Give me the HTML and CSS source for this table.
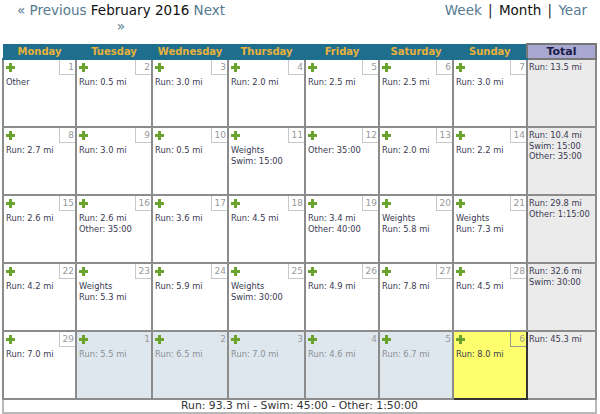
FILE: index.html
```html
<!DOCTYPE html>
<html>
<head>
<meta charset="utf-8">
<link rel="stylesheet" href="styles.css">
</head>
<body>
<div class="nav">
  <div class="nav-left"><a class="lnk">« Previous</a> <span class="cur">February 2016</span> <a class="lnk">Next</a> <a class="lnk">»</a></div>
  <div class="nav-right"><a class="lnk">Week</a> | <span class="cur">Month</span> | <a class="lnk">Year</a></div>
</div>
<table class="cal">
  <colgroup>
    <col class="w-mon"><col class="w-tue"><col class="w-wed"><col class="w-thu"><col class="w-fri"><col class="w-sat"><col class="w-sun"><col class="w-tot">
  </colgroup>
  <thead>
    <tr>
      <th>Monday</th><th>Tuesday</th><th>Wednesday</th><th>Thursday</th><th>Friday</th><th>Saturday</th><th>Sunday</th><th class="th-total">Total</th>
    </tr>
  </thead>
  <tbody>
    <tr>
      <td class="day"><div class="top"><svg class="add" viewBox="0 0 9 9"><path d="M3 0h3v3h3v3h-3v3h-3v-3h-3v-3h3z"/></svg><span class="num">1</span></div><div class="acts">Other</div></td>
      <td class="day"><div class="top"><svg class="add" viewBox="0 0 9 9"><path d="M3 0h3v3h3v3h-3v3h-3v-3h-3v-3h3z"/></svg><span class="num">2</span></div><div class="acts">Run: 0.5 mi</div></td>
      <td class="day"><div class="top"><svg class="add" viewBox="0 0 9 9"><path d="M3 0h3v3h3v3h-3v3h-3v-3h-3v-3h3z"/></svg><span class="num">3</span></div><div class="acts">Run: 3.0 mi</div></td>
      <td class="day"><div class="top"><svg class="add" viewBox="0 0 9 9"><path d="M3 0h3v3h3v3h-3v3h-3v-3h-3v-3h3z"/></svg><span class="num">4</span></div><div class="acts">Run: 2.0 mi</div></td>
      <td class="day"><div class="top"><svg class="add" viewBox="0 0 9 9"><path d="M3 0h3v3h3v3h-3v3h-3v-3h-3v-3h3z"/></svg><span class="num">5</span></div><div class="acts">Run: 2.5 mi</div></td>
      <td class="day"><div class="top"><svg class="add" viewBox="0 0 9 9"><path d="M3 0h3v3h3v3h-3v3h-3v-3h-3v-3h3z"/></svg><span class="num">6</span></div><div class="acts">Run: 2.5 mi</div></td>
      <td class="day"><div class="top"><svg class="add" viewBox="0 0 9 9"><path d="M3 0h3v3h3v3h-3v3h-3v-3h-3v-3h3z"/></svg><span class="num">7</span></div><div class="acts">Run: 3.0 mi</div></td>
      <td class="total"><div class="acts">Run: 13.5 mi</div></td>
    </tr>
    <tr>
      <td class="day"><div class="top"><svg class="add" viewBox="0 0 9 9"><path d="M3 0h3v3h3v3h-3v3h-3v-3h-3v-3h3z"/></svg><span class="num">8</span></div><div class="acts">Run: 2.7 mi</div></td>
      <td class="day"><div class="top"><svg class="add" viewBox="0 0 9 9"><path d="M3 0h3v3h3v3h-3v3h-3v-3h-3v-3h3z"/></svg><span class="num">9</span></div><div class="acts">Run: 3.0 mi</div></td>
      <td class="day"><div class="top"><svg class="add" viewBox="0 0 9 9"><path d="M3 0h3v3h3v3h-3v3h-3v-3h-3v-3h3z"/></svg><span class="num">10</span></div><div class="acts">Run: 0.5 mi</div></td>
      <td class="day"><div class="top"><svg class="add" viewBox="0 0 9 9"><path d="M3 0h3v3h3v3h-3v3h-3v-3h-3v-3h3z"/></svg><span class="num">11</span></div><div class="acts">Weights<br>Swim: 15:00</div></td>
      <td class="day"><div class="top"><svg class="add" viewBox="0 0 9 9"><path d="M3 0h3v3h3v3h-3v3h-3v-3h-3v-3h3z"/></svg><span class="num">12</span></div><div class="acts">Other: 35:00</div></td>
      <td class="day"><div class="top"><svg class="add" viewBox="0 0 9 9"><path d="M3 0h3v3h3v3h-3v3h-3v-3h-3v-3h3z"/></svg><span class="num">13</span></div><div class="acts">Run: 2.0 mi</div></td>
      <td class="day"><div class="top"><svg class="add" viewBox="0 0 9 9"><path d="M3 0h3v3h3v3h-3v3h-3v-3h-3v-3h3z"/></svg><span class="num">14</span></div><div class="acts">Run: 2.2 mi</div></td>
      <td class="total"><div class="acts">Run: 10.4 mi<br>Swim: 15:00<br>Other: 35:00</div></td>
    </tr>
    <tr>
      <td class="day"><div class="top"><svg class="add" viewBox="0 0 9 9"><path d="M3 0h3v3h3v3h-3v3h-3v-3h-3v-3h3z"/></svg><span class="num">15</span></div><div class="acts">Run: 2.6 mi</div></td>
      <td class="day"><div class="top"><svg class="add" viewBox="0 0 9 9"><path d="M3 0h3v3h3v3h-3v3h-3v-3h-3v-3h3z"/></svg><span class="num">16</span></div><div class="acts">Run: 2.6 mi<br>Other: 35:00</div></td>
      <td class="day"><div class="top"><svg class="add" viewBox="0 0 9 9"><path d="M3 0h3v3h3v3h-3v3h-3v-3h-3v-3h3z"/></svg><span class="num">17</span></div><div class="acts">Run: 3.6 mi</div></td>
      <td class="day"><div class="top"><svg class="add" viewBox="0 0 9 9"><path d="M3 0h3v3h3v3h-3v3h-3v-3h-3v-3h3z"/></svg><span class="num">18</span></div><div class="acts">Run: 4.5 mi</div></td>
      <td class="day"><div class="top"><svg class="add" viewBox="0 0 9 9"><path d="M3 0h3v3h3v3h-3v3h-3v-3h-3v-3h3z"/></svg><span class="num">19</span></div><div class="acts">Run: 3.4 mi<br>Other: 40:00</div></td>
      <td class="day"><div class="top"><svg class="add" viewBox="0 0 9 9"><path d="M3 0h3v3h3v3h-3v3h-3v-3h-3v-3h3z"/></svg><span class="num">20</span></div><div class="acts">Weights<br>Run: 5.8 mi</div></td>
      <td class="day"><div class="top"><svg class="add" viewBox="0 0 9 9"><path d="M3 0h3v3h3v3h-3v3h-3v-3h-3v-3h3z"/></svg><span class="num">21</span></div><div class="acts">Weights<br>Run: 7.3 mi</div></td>
      <td class="total"><div class="acts">Run: 29.8 mi<br>Other: 1:15:00</div></td>
    </tr>
    <tr>
      <td class="day"><div class="top"><svg class="add" viewBox="0 0 9 9"><path d="M3 0h3v3h3v3h-3v3h-3v-3h-3v-3h3z"/></svg><span class="num">22</span></div><div class="acts">Run: 4.2 mi</div></td>
      <td class="day"><div class="top"><svg class="add" viewBox="0 0 9 9"><path d="M3 0h3v3h3v3h-3v3h-3v-3h-3v-3h3z"/></svg><span class="num">23</span></div><div class="acts">Weights<br>Run: 5.3 mi</div></td>
      <td class="day"><div class="top"><svg class="add" viewBox="0 0 9 9"><path d="M3 0h3v3h3v3h-3v3h-3v-3h-3v-3h3z"/></svg><span class="num">24</span></div><div class="acts">Run: 5.9 mi</div></td>
      <td class="day"><div class="top"><svg class="add" viewBox="0 0 9 9"><path d="M3 0h3v3h3v3h-3v3h-3v-3h-3v-3h3z"/></svg><span class="num">25</span></div><div class="acts">Weights<br>Swim: 30:00</div></td>
      <td class="day"><div class="top"><svg class="add" viewBox="0 0 9 9"><path d="M3 0h3v3h3v3h-3v3h-3v-3h-3v-3h3z"/></svg><span class="num">26</span></div><div class="acts">Run: 4.9 mi</div></td>
      <td class="day"><div class="top"><svg class="add" viewBox="0 0 9 9"><path d="M3 0h3v3h3v3h-3v3h-3v-3h-3v-3h3z"/></svg><span class="num">27</span></div><div class="acts">Run: 7.8 mi</div></td>
      <td class="day"><div class="top"><svg class="add" viewBox="0 0 9 9"><path d="M3 0h3v3h3v3h-3v3h-3v-3h-3v-3h3z"/></svg><span class="num">28</span></div><div class="acts">Run: 4.5 mi</div></td>
      <td class="total"><div class="acts">Run: 32.6 mi<br>Swim: 30:00</div></td>
    </tr>
    <tr>
      <td class="day"><div class="top"><svg class="add" viewBox="0 0 9 9"><path d="M3 0h3v3h3v3h-3v3h-3v-3h-3v-3h3z"/></svg><span class="num">29</span></div><div class="acts">Run: 7.0 mi</div></td>
      <td class="day next"><div class="top"><svg class="add" viewBox="0 0 9 9"><path d="M3 0h3v3h3v3h-3v3h-3v-3h-3v-3h3z"/></svg><span class="num">1</span></div><div class="acts">Run: 5.5 mi</div></td>
      <td class="day next"><div class="top"><svg class="add" viewBox="0 0 9 9"><path d="M3 0h3v3h3v3h-3v3h-3v-3h-3v-3h3z"/></svg><span class="num">2</span></div><div class="acts">Run: 6.5 mi</div></td>
      <td class="day next"><div class="top"><svg class="add" viewBox="0 0 9 9"><path d="M3 0h3v3h3v3h-3v3h-3v-3h-3v-3h3z"/></svg><span class="num">3</span></div><div class="acts">Run: 7.0 mi</div></td>
      <td class="day next"><div class="top"><svg class="add" viewBox="0 0 9 9"><path d="M3 0h3v3h3v3h-3v3h-3v-3h-3v-3h3z"/></svg><span class="num">4</span></div><div class="acts">Run: 4.6 mi</div></td>
      <td class="day next"><div class="top"><svg class="add" viewBox="0 0 9 9"><path d="M3 0h3v3h3v3h-3v3h-3v-3h-3v-3h3z"/></svg><span class="num">5</span></div><div class="acts">Run: 6.7 mi</div></td>
      <td class="day today"><div class="top"><svg class="add" viewBox="0 0 9 9"><path d="M3 0h3v3h3v3h-3v3h-3v-3h-3v-3h3z"/></svg><span class="num">6</span></div><div class="acts">Run: 8.0 mi</div></td>
      <td class="total"><div class="acts">Run: 45.3 mi</div></td>
    </tr>
  </tbody>
  <tfoot>
    <tr><td class="summary" colspan="8">Run: 93.3 mi - Swim: 45:00 - Other: 1:50:00</td></tr>
  </tfoot>
</table>
</body>
</html>
```
FILE: styles.css
```css
body {
  margin: 0;
  background: #fff;
  font-family: "DejaVu Sans", Verdana, sans-serif;
  color: #333;
}
.nav {
  display: flex;
  justify-content: space-between;
  align-items: flex-start;
  height: 43px;
  font-size: 13.5px;
  line-height: 16px;
}
.nav-left {
  width: 214px;
  margin-left: 14px;
  padding-top: 2px;
  text-align: center;
  color: #111;
}
.nav-right {
  margin-right: 13px;
  padding-top: 2px;
  color: #222;
  word-spacing: 2px;
}
.lnk { color: #557a91; text-decoration: none; }
.cur { color: #111; }

.cal {
  border-collapse: collapse;
  table-layout: fixed;
  width: 593px;
  margin-left: 2px;
}
.w-mon { width: 73px; }
.w-tue { width: 76px; }
.w-wed { width: 76px; }
.w-thu { width: 77px; }
.w-fri { width: 74px; }
.w-sat { width: 74px; }
.w-sun { width: 74px; }
.w-tot { width: 69px; }

.cal th {
  background: #1e6f8e;
  color: #e7b13c;
  font-size: 10px;
  font-weight: bold;
  height: 13px;
  line-height: 13px;
  padding: 0;
  border: 1px solid #1e6f8e;
  border-bottom: 2px solid #1e6f8e;
}
.cal th.th-total {
  background: #a8a8d3;
  color: #1b1b48;
  font-size: 11px;
  border: 2px solid #777;
}
.cal td {
  border: 2px solid #8c8c8c;
  padding: 0;
  vertical-align: top;
  height: 66px;
  font-size: 8.3px;
  line-height: 10.6px;
  color: #3a3a52;
}
.top {
  display: flex;
  justify-content: space-between;
  align-items: flex-start;
  height: 16px;
}
.add {
  width: 9px;
  height: 9px;
  margin: 3px 0 0 2px;
  fill: #6aa32c;
}
.num {
  width: 14px;
  height: 14px;
  padding-right: 1px;
  border-left: 1px solid #c8c8c8;
  border-bottom: 1px solid #c8c8c8;
  text-align: right;
  font-size: 9px;
  line-height: 14px;
  color: #999;
}
.acts {
  padding: 1px 2px 0 2px;
}
.day.next {
  background: #dfe7ee;
}
.day.next .acts { color: #8a8f95; }
.day.next .num { border-color: transparent; color: #9a9a9a; }
.cal td.today {
  background: #ffff6e;
  border: 2px solid #333;
}
.today .num { border-color: #999; }
.total {
  background: #ebebeb;
}
.total .acts { padding: 2px 2px 0 1px; }
.cal td.summary {
  height: 12px;
  background: #fff;
  text-align: center;
  font-size: 10.8px;
  line-height: 12px;
  color: #333;
  vertical-align: middle;
  border: 2px solid #b8b8b8;
  border-top-color: #8c8c8c;
}
```
